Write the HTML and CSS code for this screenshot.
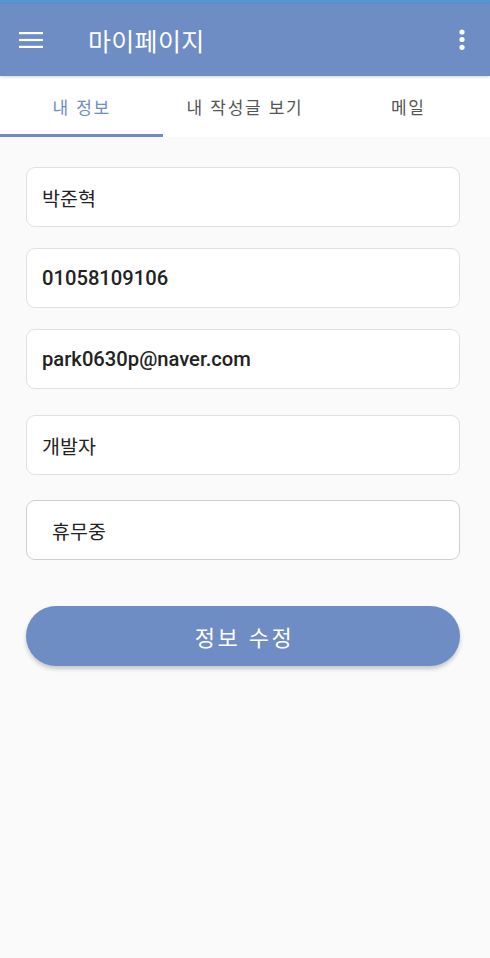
FILE: index.html
```html
<!DOCTYPE html>
<html lang="ko">
<head>
<meta charset="utf-8">
<title>마이페이지</title>
<link rel="stylesheet" href="styles.css">
</head>
<body>
<div class="status-strip"></div>
<header class="toolbar">
  <button class="icon-btn menu-btn" aria-label="메뉴">
    <svg width="24" height="24" viewBox="0 0 24 24"><rect x="0" y="4" width="24" height="2.2" fill="#fff"/><rect x="0" y="10.9" width="24" height="2.2" fill="#fff"/><rect x="0" y="17.8" width="24" height="2.2" fill="#fff"/></svg>
  </button>
  <h1 class="title">마이페이지</h1>
  <button class="icon-btn more-btn" aria-label="더보기">
    <svg width="8" height="22" viewBox="0 0 8 22"><circle cx="4" cy="3" r="2.6" fill="#fff"/><circle cx="4" cy="10.5" r="2.6" fill="#fff"/><circle cx="4" cy="18.3" r="2.6" fill="#fff"/></svg>
  </button>
</header>
<nav class="tabs">
  <div class="tab tab--active">내 정보</div>
  <div class="tab">내 작성글 보기</div>
  <div class="tab">메일</div>
</nav>
<main class="form">
  <input class="field" type="text" value="박준혁">
  <input class="field field--latin" type="text" value="01058109106">
  <input class="field field--latin" type="text" value="park0630p@naver.com">
  <input class="field field--spaced" type="text" value="개발자">
  <input class="field field--spaced-sm field--indent field--focused" type="text" value="휴무중">
  <button class="submit">정보 수정</button>
</main>
</body>
</html>
```

FILE: styles.css
```css
* { box-sizing: border-box; }
html, body { margin: 0; padding: 0; }
body {
  width: 490px;
  height: 958px;
  background: #fafafa;
  font-family: Roboto, "Noto Sans CJK KR", sans-serif;
  overflow: hidden;
}
.status-strip {
  height: 4px;
  background: #5a94cf;
}
.toolbar {
  height: 72px;
  background: #6d8dc4;
  display: flex;
  align-items: center;
  position: relative;
  z-index: 2;
  box-shadow: 0 1px 3px rgba(0,0,0,0.18);
}
.icon-btn {
  background: none;
  border: 0;
  padding: 0;
  display: flex;
  align-items: center;
  justify-content: center;
}
.menu-btn {
  margin-left: 19px;
  width: 24px;
  height: 24px;
}
.title {
  margin: 0 0 0 45px;
  font-family: "Noto Sans CJK KR", sans-serif;
  font-weight: 400;
  font-size: 25px;
  letter-spacing: 0.3px;
  color: #fff;
  flex: 1;
  line-height: 1;
}
.more-btn {
  margin-right: 24px;
  width: 8px;
  height: 22px;
}
.tabs {
  height: 61px;
  background: #fff;
  display: flex;
}
.tab {
  flex: 1;
  display: flex;
  align-items: center;
  justify-content: center;
  font-family: "Noto Sans CJK KR", sans-serif;
  font-size: 17px;
  letter-spacing: 1.7px;
  color: #555;
  border-bottom: 3px solid transparent;
  padding-top: 3px;
}
.tab--active {
  color: #6d8dc4;
  border-bottom-color: #6d8dc4;
}
.form {
  padding: 30px 30px 0 26px;
  display: flex;
  flex-direction: column;
  gap: 21px;
}
.field {
  width: 434px;
  height: 60px;
  border: 1.5px solid #e0e0e0;
  border-radius: 9px;
  background: #fff;
  padding: 0 15px;
  font-family: Roboto, "Noto Sans CJK KR", sans-serif;
  font-size: 19.5px;
  color: #222;
  outline: none;
}
.field--latin {
  font-size: 20.2px;
  font-weight: 500;
}
.field--spaced { margin-top: 5px; }
.field--spaced-sm { margin-top: 4px; }
.field--indent { padding-left: 25px; }
.field--focused { border-color: #cfcfcf; }
.submit {
  margin-top: 25px;
  width: 434px;
  height: 60px;
  border: 0;
  border-radius: 30px;
  background: #6d8dc4;
  color: #fff;
  font-family: "Noto Sans CJK KR", sans-serif;
  font-size: 22px;
  letter-spacing: 2.5px;
  padding-left: 9px;
  box-shadow: 0 3px 4px rgba(0,0,0,0.2);
}
```
